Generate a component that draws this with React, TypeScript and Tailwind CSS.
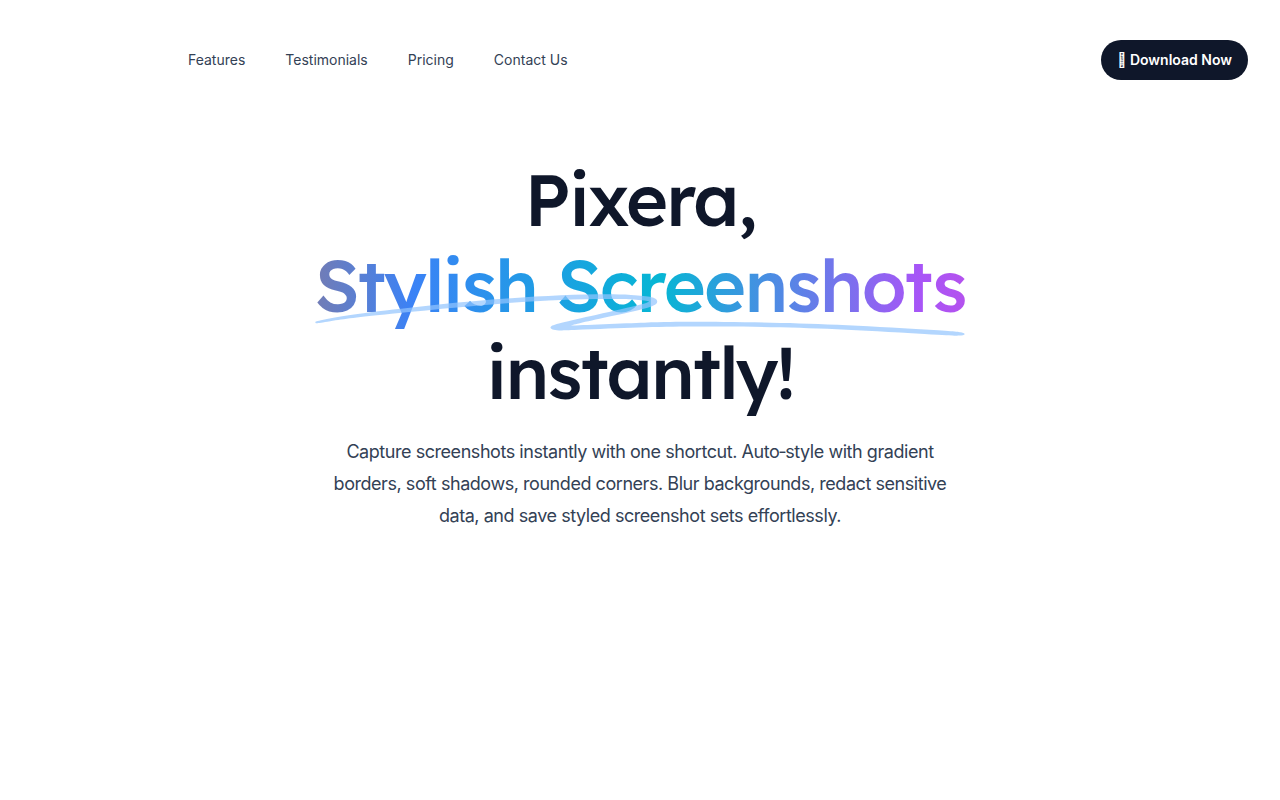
import React from 'react';

const links = [
  { label: 'Features', href: '#features' },
  { label: 'Testimonials', href: '#testimonials' },
  { label: 'Pricing', href: '#pricing' },
  { label: 'Contact Us', href: '#contact' },
];

function Header() {
  return (
    <header className="py-10">
      <nav className="mx-auto flex max-w-7xl items-center justify-between px-8">
        <div className="flex items-center gap-10 pl-39">
          {links.map((link) => (
            <a key={link.label} href={link.href} className="text-sm text-[#334155] hover:text-slate-900">
              {link.label}
            </a>
          ))}
        </div>
        <button
          type="button"
          className="rounded-full bg-[#0f172a] px-4 py-2 text-sm leading-6 font-semibold text-white hover:bg-slate-700"
        >
          {'\uf8ff'} Download Now
        </button>
      </nav>
    </header>
  );
}

function Underline() {
  return (
    <svg
      aria-hidden="true"
      viewBox="0 0 418 42"
      className="absolute top-3/5 left-0 h-[0.58em] w-full fill-[#93c5fd]/70"
      preserveAspectRatio="none"
    >
      <path d="M203.371.916c-26.013-2.078-76.686 1.963-124.73 9.946L67.3 12.749C35.421 18.062 18.2 21.766 6.004 25.934 1.244 27.561.828 27.778.874 28.61c.07 1.214.828 1.121 9.595-1.176 9.072-2.377 17.15-3.92 39.246-7.496C123.565 7.986 157.869 4.492 195.942 5.046c7.461.108 19.25 1.696 19.17 2.582-.107 1.183-7.874 4.31-25.75 10.366-21.992 7.45-35.43 12.534-36.701 13.884-2.173 2.308-.202 4.407 4.442 4.734 2.654.187 3.263.157 15.593-.78 35.401-2.686 57.944-3.488 88.365-3.143 46.327.526 75.721 2.23 130.788 7.584 19.787 1.924 20.814 1.98 24.557 1.332l.066-.011c1.201-.203 1.53-1.825.399-2.335-2.911-1.31-4.893-1.604-22.048-3.261-57.509-5.556-87.871-7.36-132.059-7.842-23.239-.254-33.617-.116-50.627.674-11.629.54-42.371 2.494-46.696 2.967-2.359.259 8.133-3.625 26.504-9.81 23.239-7.825 27.934-10.149 28.304-14.005.417-4.348-3.529-6-16.878-7.066Z" />
    </svg>
  );
}

function Hero() {
  return (
    <section className="mx-auto max-w-7xl px-8 pt-9 text-center">
      <h1 className="mx-auto max-w-4xl font-[Lexend,Lato,sans-serif] text-7xl leading-[1.2] font-medium tracking-tight text-[#0f172a]">
        Pixera,
        <br />
        <span className="relative whitespace-nowrap">
          <span className="bg-[linear-gradient(90deg,#737cb4_0%,#3b82f6_15%,#06b6d4_53%,#a855f7_93%,#b452ee_100%)] bg-clip-text text-transparent">
            Stylish Screenshots
          </span>
          <Underline />
        </span>
        <br />
        instantly!
      </h1>
      <p className="mx-auto mt-[21px] max-w-2xl px-6 text-lg leading-8 tracking-tight text-[#334155]">
        Capture screenshots instantly with one shortcut. Auto‑style with gradient borders, soft shadows, rounded
        corners. Blur backgrounds, redact sensitive data, and save styled screenshot sets effortlessly.
      </p>
    </section>
  );
}

function App() {
  return (
    <div className="min-h-screen bg-white font-[Inter,sans-serif]">
      <Header />
      <main>
        <Hero />
      </main>
    </div>
  );
}

export default App;
